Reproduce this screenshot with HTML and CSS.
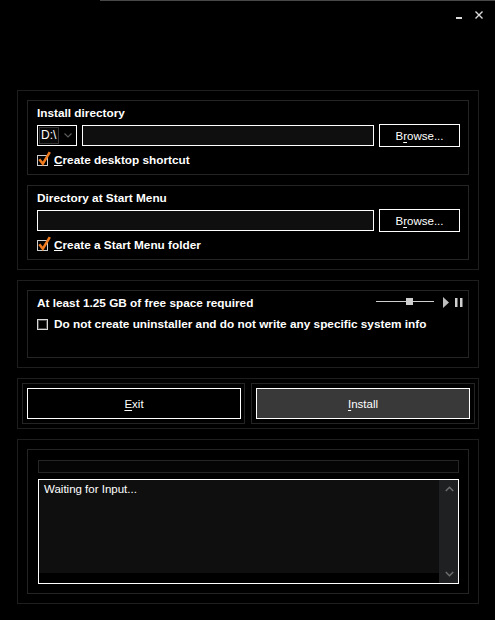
FILE: index.html
```html
<!DOCTYPE html>
<html>
<head>
<meta charset="utf-8">
<link rel="stylesheet" href="styles.css">
</head>
<body>
<div class="window">
  <div class="titlebar">
    <div class="topline"></div>
    <div class="controls">
      <span class="min"></span>
      <svg class="close" width="8" height="8" viewBox="0 0 8 8"><path d="M0.5 0.5 L7.5 7.5 M7.5 0.5 L0.5 7.5" stroke="#dcdcdc" stroke-width="1.4" fill="none"/></svg>
    </div>
  </div>

  <div class="group">
    <div class="panel">
      <div class="label">Install directory</div>
      <div class="row">
        <div class="combo">
          <span class="drive">D:\</span>
          <span class="chev"><svg width="8" height="5" viewBox="0 0 8 5"><path d="M0.5 0.5 L4 4 L7.5 0.5" stroke="#5a5a5a" stroke-width="1.2" fill="none"/></svg></span>
        </div>
        <div class="field"></div>
        <button class="btn browse">B<u>r</u>owse...</button>
      </div>
      <div class="check">
        <svg class="cb" width="14" height="16" viewBox="0 0 14 16"><rect x="0.5" y="4.5" width="10" height="10" fill="#000" stroke="#cfcfcf"/><path d="M2.3 8.3 L5.8 12.8 L12.8 1.2" stroke="#f07a1e" stroke-width="2.6" fill="none" stroke-linejoin="miter"/></svg>
        <span class="bold"><u>C</u>reate desktop shortcut</span>
      </div>
    </div>
    <div class="panel second">
      <div class="label">Directory at Start Menu</div>
      <div class="row">
        <div class="field wide"></div>
        <button class="btn browse">B<u>r</u>owse...</button>
      </div>
      <div class="check">
        <svg class="cb" width="14" height="16" viewBox="0 0 14 16"><rect x="0.5" y="4.5" width="10" height="10" fill="#000" stroke="#cfcfcf"/><path d="M2.3 8.3 L5.8 12.8 L12.8 1.2" stroke="#f07a1e" stroke-width="2.6" fill="none" stroke-linejoin="miter"/></svg>
        <span class="bold"><u>C</u>reate a Start Menu folder</span>
      </div>
    </div>
  </div>

  <div class="group">
    <div class="panel space">
      <div class="label-row">
        <span class="label">At least 1.25 GB of free space required</span>
        <svg class="media" width="87" height="14" viewBox="0 0 87 14">
          <line x1="0" y1="5.5" x2="58" y2="5.5" stroke="#cfcfcf" stroke-width="1"/>
          <rect x="30" y="2" width="7" height="7" fill="#cfcfcf"/>
          <polygon points="67,1 73,6.5 67,12" fill="#bdbdbd"/>
          <rect x="79" y="2" width="2.5" height="9" fill="#cfcfcf"/>
          <rect x="84" y="2" width="2.5" height="9" fill="#cfcfcf"/>
        </svg>
      </div>
      <div class="check second-line">
        <svg class="cb-empty" width="14" height="14" viewBox="0 0 14 14"><rect x="0.5" y="2.5" width="10" height="10" fill="#000" stroke="#d8d8d8"/><rect x="1.5" y="3.5" width="8" height="8" fill="none" stroke="#4a4a4a"/></svg>
        <span class="bold">Do not create uninstaller and do not write any specific system info</span>
      </div>
    </div>
  </div>

  <div class="group buttons">
    <div class="btn-box left"><button class="btn big"><u>E</u>xit</button></div>
    <div class="btn-box right"><button class="btn big install"><u>I</u>nstall</button></div>
  </div>

  <div class="group">
    <div class="panel log-panel">
      <div class="progress"></div>
      <div class="log">
        <div class="log-main">
          <div class="log-text">Waiting for Input...</div>
          <div class="log-hscroll"></div>
        </div>
        <div class="vscroll">
          <svg width="9" height="6" viewBox="0 0 9 6"><path d="M0.8 5 L4.5 1.3 L8.2 5" stroke="#6e6e6e" stroke-width="1.5" fill="none"/></svg>
          <svg width="9" height="6" viewBox="0 0 9 6"><path d="M0.8 1 L4.5 4.7 L8.2 1" stroke="#6e6e6e" stroke-width="1.5" fill="none"/></svg>
        </div>
      </div>
    </div>
  </div>
</div>
</body>
</html>
```

FILE: styles.css
```css
* { box-sizing: border-box; }
html, body {
  margin: 0;
  padding: 0;
  background: #000;
}
body {
  width: 495px;
  height: 620px;
  overflow: hidden;
  font-family: "Liberation Sans", Arial, sans-serif;
  color: #fff;
}
.window {
  width: 495px;
  height: 620px;
}
.titlebar {
  height: 90px;
}
.topline {
  margin-left: 100px;
  height: 1px;
  background: #484848;
}
.controls {
  display: flex;
  justify-content: flex-end;
  align-items: flex-end;
  gap: 13px;
  margin-top: 10px;
  height: 8px;
  padding-right: 12px;
}
.min {
  display: block;
  width: 6px;
  height: 2px;
  background: #dcdcdc;
}
.close { display: block; }

.group {
  margin-left: 17px;
  width: 462px;
  border: 1px solid #1e1e1e;
  padding: 9px;
  margin-bottom: 10px;
}
.panel {
  border: 1px solid #242424;
  padding: 5px 8px 7px 9px;
}
.panel.second { margin-top: 10px; }

.label, .bold {
  font-weight: bold;
  font-size: 11.8px;
  line-height: 14px;
  white-space: nowrap;
}
.label { display: block; }

.row {
  display: flex;
  align-items: center;
  height: 23px;
  margin-top: 4px;
}
.combo {
  width: 40px;
  height: 21px;
  border: 1px solid #fff;
  display: flex;
  align-items: center;
  margin-right: 5px;
  padding-left: 1px;
}
.drive {
  width: 20px;
  height: 17px;
  border: 1px solid #363636;
  background: #080808;
  font-size: 12px;
  line-height: 15px;
  padding-left: 1px;
  white-space: nowrap;
}
.chev {
  flex: 1;
  display: flex;
  justify-content: center;
  align-items: center;
  padding-left: 1px;
}
.chev svg { display: block; }
.field {
  width: 292px;
  height: 21px;
  border: 1px solid #fff;
  background: #0f0f0f;
  margin-right: 5px;
}
.field.wide { width: 337px; }

.btn {
  font-family: "Liberation Sans", Arial, sans-serif;
  font-size: 11.5px;
  color: #fff;
  background: #000;
  border: 1px solid #fff;
  padding: 0;
  margin: 0;
}
.btn u { text-decoration: underline; text-underline-offset: 2px; }
.browse {
  width: 81px;
  height: 23px;
  flex: none;
}

.check {
  display: flex;
  align-items: center;
  height: 14px;
  margin-top: 6px;
}
.check .cb {
  display: block;
  margin-top: -2px;
  margin-right: 3px;
  overflow: visible;
}
.check .cb-empty {
  display: block;
  margin-right: 3px;
}
.bold u { text-decoration: underline; }

.panel.space {
  height: 68px;
}
.label-row {
  display: flex;
  justify-content: space-between;
  align-items: center;
  height: 14px;
}
.media {
  display: block;
  margin-right: -3px;
}
.check.second-line { margin-top: 7px; }

.group.buttons {
  display: flex;
  gap: 6px;
  padding: 4px 3px 4px 4px;
}
.btn-box {
  flex: none;
  border: 1px solid #242424;
  padding: 4px;
}
.btn-box.left { width: 223px; padding-right: 3px; }
.btn-box.right { width: 224px; }
.btn.big {
  display: block;
  width: 100%;
  height: 31px;
}
.btn.install { background: #393939; }

.log-panel {
  padding: 10px 9px 9px 10px;
}
.progress {
  height: 13px;
  border: 1px solid #262626;
  background: #050505;
  margin-bottom: 6px;
}
.log {
  height: 105px;
  border: 1px solid #fff;
  display: flex;
}
.log-main {
  flex: 1;
  display: flex;
  flex-direction: column;
}
.log-text {
  height: 93px;
  background: #0f0f0f;
  font-size: 11.5px;
  line-height: 14px;
  padding: 2px 0 0 5px;
}
.log-hscroll {
  flex: 1;
  background: #000;
}
.vscroll {
  width: 19px;
  background: #1f2022;
  display: flex;
  flex-direction: column;
  justify-content: space-between;
  align-items: center;
  padding: 6px 0 6px 1px;
}
.vscroll svg { display: block; }
```
